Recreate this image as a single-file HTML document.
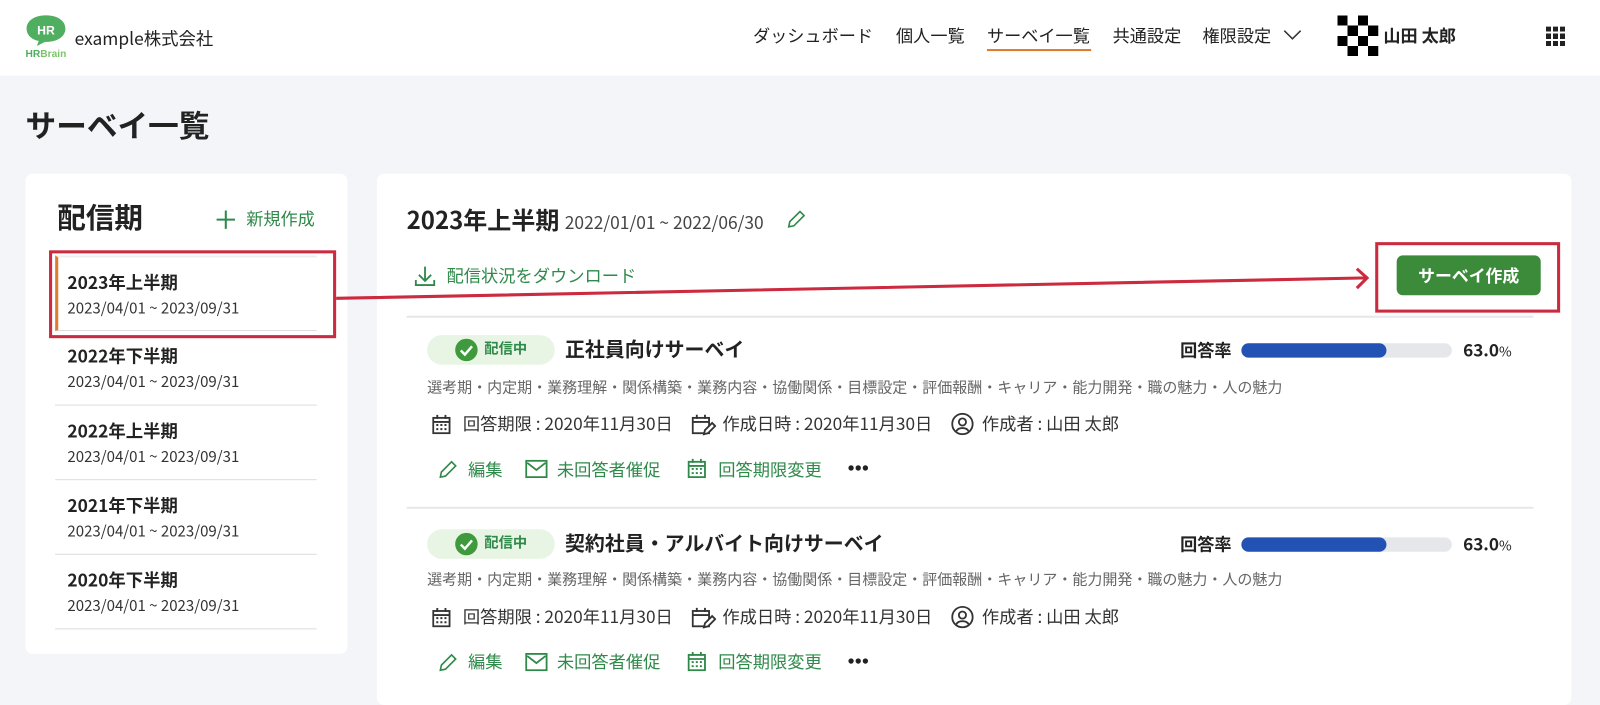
<!DOCTYPE html>
<html><head><meta charset="utf-8"><style>
*{margin:0;padding:0;box-sizing:border-box}
html,body{width:1600px;height:676px;overflow:hidden;background:#f4f5f8}
body{font-family:"Noto Sans CJK JP","Liberation Sans",sans-serif;color:#222;line-height:1.25}
#w{position:absolute;left:0;top:0;width:1566px;height:662px;transform:scale(1.0217);transform-origin:0 0}
.a{position:absolute;white-space:nowrap}
.hdr{position:absolute;left:0;top:0;width:1566px;height:74px;background:#fff}
.nav{font-size:16.8px;top:24px;color:#222}
.card{position:absolute;background:#fff;border-radius:7px}
.item{position:absolute;left:54px;width:256px;height:73px;border-bottom:1px solid #ddd}
.item b{position:absolute;left:12px;top:13px;font-size:17px}
.item span{position:absolute;left:12px;top:41px;font-size:14.7px;color:#333}
.g{color:#2f8a4a}
.ico{position:absolute}
.m{font-size:16.9px;color:#333}
.t{font-size:14.7px;color:#666}
</style></head><body><div id="w">
<div class="hdr"></div>
<svg class="ico" style="left:24px;top:14px" width="42" height="44" viewBox="0 0 42 44"><path d="M21 1C10 1 2 6 2 14c0 6 5 11 12 12l-2 5 8-4h1c11 0 19-5 19-13S32 1 21 1z" fill="#4fae5f"/><text x="21" y="20" font-size="12" font-weight="bold" fill="#fff" text-anchor="middle" font-family="Liberation Sans">HR</text><text x="1" y="42" font-size="10" font-weight="bold" fill="#4fae5f" font-family="Liberation Sans">HR<tspan fill="#7cc36a">Brain</tspan></text></svg>
<div class="a" style="left:73px;top:26px;font-size:17px">example株式会社</div>
<div class="a nav" style="left:737px">ダッシュボード</div>
<div class="a nav" style="left:877px">個人一覧</div>
<div class="a nav" style="left:966px">サーベイ一覧</div>
<div class="a" style="left:966px;top:48px;width:102px;height:2px;background:#e07a2e"></div>
<div class="a nav" style="left:1089px">共通設定</div>
<div class="a nav" style="left:1177px">権限設定</div>
<svg class="ico" style="left:1256px;top:28px" width="18" height="12"><path d="M1 2l8 8 8-8" fill="none" stroke="#333" stroke-width="1.5"/></svg>
<svg class="ico" style="left:1309px;top:15px" width="40" height="40" viewBox="0 0 40 40" shape-rendering="crispEdges"><path d="M0 0h10v10H0zM20 0h10v10H20zM10 10h10v10H10zM30 10h10v10H30zM0 20h10v10H0zM20 20h10v10H20zM10 30h10v10H10zM30 30h10v10H30z" fill="#000"/></svg>
<div class="a" style="left:1354px;top:24px;font-size:16.8px;font-weight:bold">山田 太郎</div>
<svg class="ico" style="left:1513px;top:26px" width="20" height="20" shape-rendering="crispEdges"><g fill="#222"><rect x="0" y="0" width="5" height="5"/><rect x="7" y="0" width="5" height="5"/><rect x="14" y="0" width="5" height="5"/><rect x="0" y="7" width="5" height="5"/><rect x="7" y="7" width="5" height="5"/><rect x="14" y="7" width="5" height="5"/><rect x="0" y="14" width="5" height="5"/><rect x="7" y="14" width="5" height="5"/><rect x="14" y="14" width="5" height="5"/></g></svg>
<div class="a" style="left:25px;top:103px;font-size:30px;font-weight:bold">サーベイ一覧</div>

<div class="card" style="left:25px;top:170px;width:315px;height:470px"></div>
<div class="a" style="left:56px;top:195px;font-size:28px;font-weight:bold">配信期</div>
<svg class="ico" style="left:211px;top:205px" width="20" height="20"><path d="M10 1v18M1 10h18" stroke="#2f8a4a" stroke-width="2"/></svg>
<div class="a g" style="left:241px;top:203px;font-size:16.8px">新規作成</div>
<div class="item" style="top:250px;border-top:2px solid #eee;border-left:3px solid #e07a2e;height:74px"><b style="left:9px">2023年上半期</b><span style="left:9px">2023/04/01 ~ 2023/09/31</span></div>
<div class="item" style="top:324px"><b>2022年下半期</b><span>2023/04/01 ~ 2023/09/31</span></div>
<div class="item" style="top:397px"><b>2022年上半期</b><span>2023/04/01 ~ 2023/09/31</span></div>
<div class="item" style="top:470px"><b>2021年下半期</b><span>2023/04/01 ~ 2023/09/31</span></div>
<div class="item" style="top:543px"><b>2020年下半期</b><span>2023/04/01 ~ 2023/09/31</span></div>

<div class="card" style="left:369px;top:170px;width:1169px;height:520px"></div>
<div class="a" style="left:398px;top:200px;font-size:23.5px;font-weight:bold">2023年上半期 <span style="font-size:17px;font-weight:normal;color:#444">2022/01/01 ~ 2022/06/30</span></div>
<svg class="ico" style="left:769px;top:205px" width="20" height="20"><path d="M3 17l1-5L14 2l4 4L8 16z" fill="none" stroke="#2f8a4a" stroke-width="1.6"/></svg>
<svg class="ico" style="left:405px;top:259px" width="22" height="22"><path d="M11 2v13M5 10l6 6 6-6M2 15v5h18v-5" fill="none" stroke="#2f8a4a" stroke-width="1.8"/></svg>
<div class="a g" style="left:437px;top:258px;font-size:16.9px">配信状況をダウンロード</div>
<div class="a" style="left:1367px;top:250px;width:141px;height:39px;background:#3c8b3b;border-radius:6px;color:#fff;font-weight:bold;font-size:16.5px;text-align:center;line-height:39px">サーベイ作成</div>
<div class="a" style="left:398px;top:309px;width:1103px;height:2px;background:#e6e7eb"></div>
<div class="a" style="left:398px;top:496px;width:1103px;height:2px;background:#e6e7eb"></div>

<!-- row 1 -->
<div class="a" style="left:418px;top:328px;width:125px;height:29px;background:#e9f5e4;border-radius:15px"></div>
<svg class="ico" style="left:445px;top:331px" width="23" height="23"><circle cx="11.5" cy="11.5" r="11" fill="#3f9a3e"/><path d="M6 12l4 4 7-8" fill="none" stroke="#fff" stroke-width="2.4"/></svg>
<div class="a g" style="left:474px;top:333px;font-size:14px;font-weight:bold">配信中</div>
<div class="a" style="left:553px;top:329px;font-size:19.5px;font-weight:bold">正社員向けサーベイ</div>
<div class="a" style="left:1155px;top:332px;font-size:16.8px;font-weight:bold">回答率</div>
<div class="a" style="left:1215px;top:336px;width:206px;height:14px;background:#e5e7eb;border-radius:7px"><div style="width:142px;height:14px;background:#2352b5;border-radius:7px"></div></div>
<div class="a" style="left:1432px;top:332px;font-size:16.8px;font-weight:bold">63.0<span style="font-size:13.5px;font-weight:normal">%</span></div>
<div class="a t" style="left:418px;top:370px">選考期・内定期・業務理解・関係構築・業務内容・協働関係・目標設定・評価報酬・キャリア・能力開発・職の魅力・人の魅力</div>
<svg class="ico" style="left:423px;top:406px" width="18" height="19"><rect x="1" y="3" width="16" height="15" fill="none" stroke="#333" stroke-width="1.8"/><path d="M1 7h16M5 0v4M13 0v4" stroke="#333" stroke-width="1.8"/><path d="M4 10h2M8 10h2M12 10h2M4 14h2M8 14h2M12 14h2" stroke="#333" stroke-width="2"/></svg>
<div class="a m" style="left:453px;top:403px">回答期限 : 2020年11月30日</div>
<svg class="ico" style="left:677px;top:405px" width="24" height="22"><rect x="1" y="4" width="16" height="15" fill="none" stroke="#333" stroke-width="1.8"/><path d="M1 8h16M5 1v4M13 1v4M12 20l1-4 7-7 3 3-7 7z" stroke="#333" stroke-width="1.8" fill="#fff"/></svg>
<div class="a m" style="left:707px;top:403px">作成日時 : 2020年11月30日</div>
<svg class="ico" style="left:931px;top:404px" width="22" height="22"><circle cx="11" cy="11" r="10" fill="none" stroke="#333" stroke-width="1.8"/><circle cx="11" cy="9" r="3.5" fill="none" stroke="#333" stroke-width="1.8"/><path d="M5 18c2-4 10-4 12 0" fill="none" stroke="#333" stroke-width="1.8"/></svg>
<div class="a m" style="left:961px;top:403px">作成者 : 山田 太郎</div>
<svg class="ico" style="left:429px;top:449px" width="20" height="20"><path d="M2 18l1-5L13 3l4 4L7 17z" fill="none" stroke="#2f8a4a" stroke-width="1.6"/></svg>
<div class="a g" style="left:458px;top:448px;font-size:16.9px">編集</div>
<svg class="ico" style="left:514px;top:450px" width="22" height="18"><rect x="1" y="1" width="20" height="16" fill="none" stroke="#2f8a4a" stroke-width="1.8"/><path d="M2 3l9 7 9-7" fill="none" stroke="#2f8a4a" stroke-width="1.8"/></svg>
<div class="a g" style="left:545px;top:448px;font-size:16.9px">未回答者催促</div>
<svg class="ico" style="left:673px;top:449px" width="18" height="19"><rect x="1" y="3" width="16" height="15" fill="none" stroke="#2f8a4a" stroke-width="1.8"/><path d="M1 7h16M5 0v4M13 0v4M4 10h2M8 10h2M12 10h2M4 14h2M8 14h2M12 14h2" stroke="#2f8a4a" stroke-width="1.8"/></svg>
<div class="a g" style="left:703px;top:448px;font-size:16.9px">回答期限変更</div>
<svg class="ico" style="left:830px;top:455px" width="22" height="6"><circle cx="3" cy="3" r="2.6" fill="#222"/><circle cx="10" cy="3" r="2.6" fill="#222"/><circle cx="17" cy="3" r="2.6" fill="#222"/></svg>

<!-- row 2 -->
<div class="a" style="left:418px;top:518px;width:125px;height:29px;background:#e9f5e4;border-radius:15px"></div>
<svg class="ico" style="left:445px;top:521px" width="23" height="23"><circle cx="11.5" cy="11.5" r="11" fill="#3f9a3e"/><path d="M6 12l4 4 7-8" fill="none" stroke="#fff" stroke-width="2.4"/></svg>
<div class="a g" style="left:474px;top:523px;font-size:14px;font-weight:bold">配信中</div>
<div class="a" style="left:553px;top:519px;font-size:19.5px;font-weight:bold">契約社員・アルバイト向けサーベイ</div>
<div class="a" style="left:1155px;top:522px;font-size:16.8px;font-weight:bold">回答率</div>
<div class="a" style="left:1215px;top:526px;width:206px;height:14px;background:#e5e7eb;border-radius:7px"><div style="width:142px;height:14px;background:#2352b5;border-radius:7px"></div></div>
<div class="a" style="left:1432px;top:522px;font-size:16.8px;font-weight:bold">63.0<span style="font-size:13.5px;font-weight:normal">%</span></div>
<div class="a t" style="left:418px;top:558px">選考期・内定期・業務理解・関係構築・業務内容・協働関係・目標設定・評価報酬・キャリア・能力開発・職の魅力・人の魅力</div>
<svg class="ico" style="left:423px;top:595px" width="18" height="19"><rect x="1" y="3" width="16" height="15" fill="none" stroke="#333" stroke-width="1.8"/><path d="M1 7h16M5 0v4M13 0v4" stroke="#333" stroke-width="1.8"/><path d="M4 10h2M8 10h2M12 10h2M4 14h2M8 14h2M12 14h2" stroke="#333" stroke-width="2"/></svg>
<div class="a m" style="left:453px;top:592px">回答期限 : 2020年11月30日</div>
<svg class="ico" style="left:677px;top:594px" width="24" height="22"><rect x="1" y="4" width="16" height="15" fill="none" stroke="#333" stroke-width="1.8"/><path d="M1 8h16M5 1v4M13 1v4M12 20l1-4 7-7 3 3-7 7z" stroke="#333" stroke-width="1.8" fill="#fff"/></svg>
<div class="a m" style="left:707px;top:592px">作成日時 : 2020年11月30日</div>
<svg class="ico" style="left:931px;top:593px" width="22" height="22"><circle cx="11" cy="11" r="10" fill="none" stroke="#333" stroke-width="1.8"/><circle cx="11" cy="9" r="3.5" fill="none" stroke="#333" stroke-width="1.8"/><path d="M5 18c2-4 10-4 12 0" fill="none" stroke="#333" stroke-width="1.8"/></svg>
<div class="a m" style="left:961px;top:592px">作成者 : 山田 太郎</div>
<svg class="ico" style="left:429px;top:638px" width="20" height="20"><path d="M2 18l1-5L13 3l4 4L7 17z" fill="none" stroke="#2f8a4a" stroke-width="1.6"/></svg>
<div class="a g" style="left:458px;top:636px;font-size:16.9px">編集</div>
<svg class="ico" style="left:514px;top:639px" width="22" height="18"><rect x="1" y="1" width="20" height="16" fill="none" stroke="#2f8a4a" stroke-width="1.8"/><path d="M2 3l9 7 9-7" fill="none" stroke="#2f8a4a" stroke-width="1.8"/></svg>
<div class="a g" style="left:545px;top:636px;font-size:16.9px">未回答者催促</div>
<svg class="ico" style="left:673px;top:638px" width="18" height="19"><rect x="1" y="3" width="16" height="15" fill="none" stroke="#2f8a4a" stroke-width="1.8"/><path d="M1 7h16M5 0v4M13 0v4M4 10h2M8 10h2M12 10h2M4 14h2M8 14h2M12 14h2" stroke="#2f8a4a" stroke-width="1.8"/></svg>
<div class="a g" style="left:703px;top:636px;font-size:16.9px">回答期限変更</div>
<svg class="ico" style="left:830px;top:644px" width="22" height="6"><circle cx="3" cy="3" r="2.6" fill="#222"/><circle cx="10" cy="3" r="2.6" fill="#222"/><circle cx="17" cy="3" r="2.6" fill="#222"/></svg>

<!-- annotations -->
<div class="a" style="left:48px;top:245px;width:281px;height:86px;border:3px solid #cc2a3e"></div>
<div class="a" style="left:1346px;top:237px;width:181px;height:69px;border:3px solid #cc2a3e"></div>
<svg class="ico" style="left:0;top:0" width="1566" height="662"><path d="M329 292L1338 272M1328 263l10 9-10 10" fill="none" stroke="#cc2a3e" stroke-width="3"/></svg>
</div></body></html>
